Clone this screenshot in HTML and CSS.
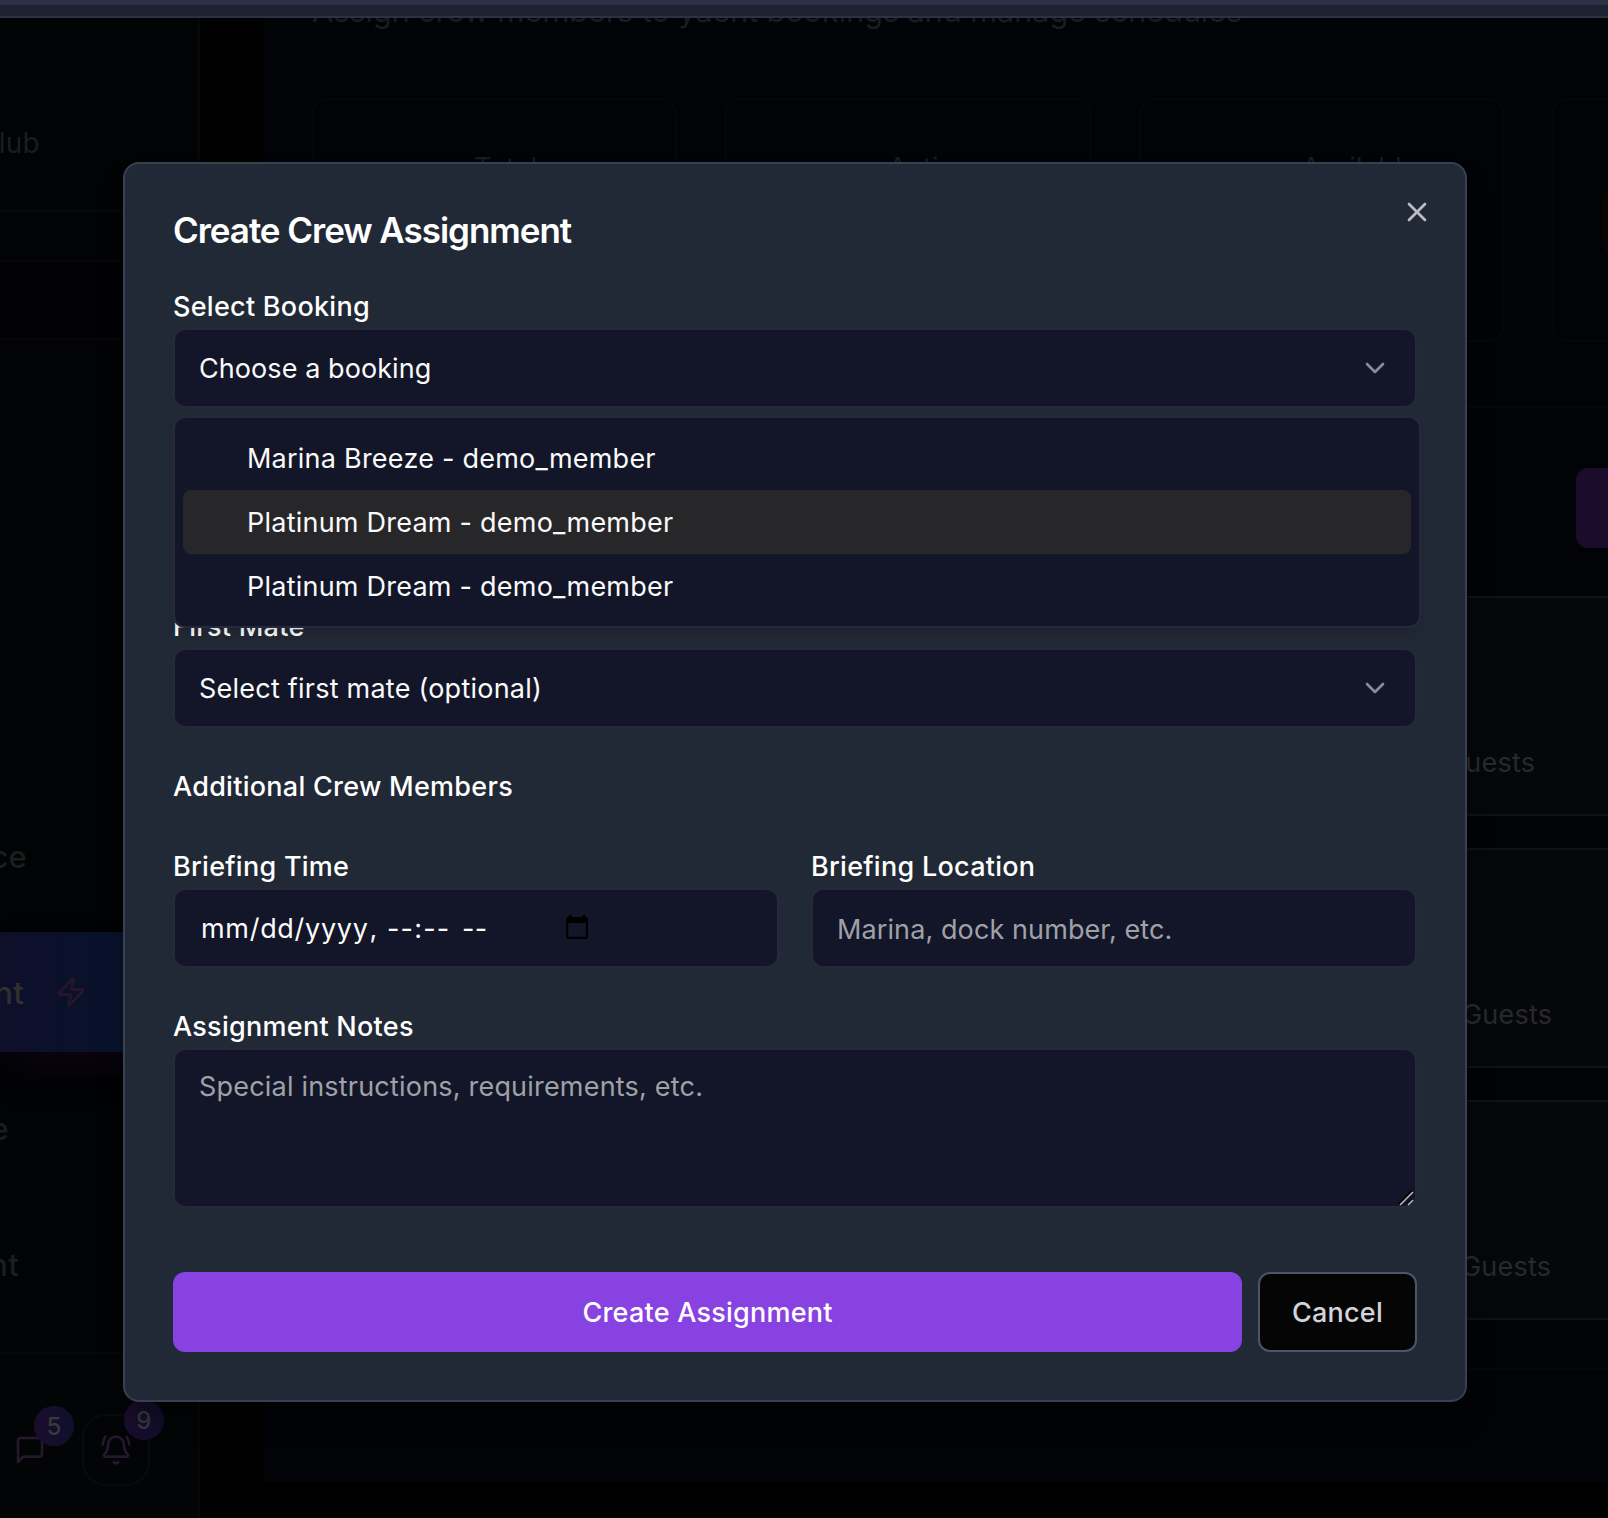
FILE: index.html
```html
<!DOCTYPE html>
<html lang="en">
<head>
<meta charset="utf-8">
<title>Create Crew Assignment</title>
<link rel="stylesheet" href="styles.css">
</head>
<body>
<div class="topbar"><div class="topbar-strip"></div></div>
<div class="page">
  <aside class="sidebar">
    <div class="brand"><span class="clip clip-club">Club</span></div>
    <div class="spacer"></div>
    <div class="profile"></div>
    <nav class="nav">
      <div class="nav-item"><span class="clip clip-ce">Maintenance</span></div>
      <div class="nav-item active"><span class="clip clip-nt">Crew Management</span>
        <svg class="zap" viewBox="0 0 24 24"><path d="M4 14a1 1 0 0 1-.78-1.63l9.9-10.2a.5.5 0 0 1 .86.46l-1.92 6.02A1 1 0 0 0 13 10h7a1 1 0 0 1 .78 1.63l-9.9 10.2a.5.5 0 0 1-.86-.46l1.92-6.02A1 1 0 0 0 11 14z"/></svg>
      </div>
      <div class="nav-item"><span class="clip clip-e">Concierge</span></div>
      <div class="nav-item"><span class="clip clip-nt2">Event</span></div>
    </nav>
    <div class="side-foot">
      <div class="foot-btn msg">
        <svg viewBox="0 0 24 24"><path d="M21 15a2 2 0 0 1-2 2H7l-4 4V5a2 2 0 0 1 2-2h14a2 2 0 0 1 2 2z"/></svg>
        <span class="badge">5</span>
      </div>
      <div class="foot-btn bell">
        <svg viewBox="0 0 24 24"><path d="M10.268 21a2 2 0 0 0 3.464 0"/><path d="M22 8c0-2.300-.8-4.300-2-6"/><path d="M3.262 15.326A1 1 0 0 0 4 17h16a1 1 0 0 0 .74-1.673C19.410 13.956 18 12.499 18 8A6 6 0 0 0 6 8c0 4.499-1.411 5.956-2.738 7.326"/><path d="M4 2C2.800 3.700 2 5.700 2 8"/></svg>
        <span class="badge">9</span>
      </div>
    </div>
  </aside>
  <main class="main">
    <p class="subtitle">Assign crew members to yacht bookings and manage schedules</p>
    <div class="stats">
      <div class="stat">Total</div>
      <div class="stat active-stat">Active</div>
      <div class="stat active-stat">Available</div>
      <div class="stat icon-stat"><span class="stat-icon"></span></div>
    </div>
    <section class="bookings">
      <div class="bookings-head"><span class="new-btn"></span></div>
      <div class="row row-a"><span>Guests</span></div>
      <div class="row"><span>Guests</span></div>
      <div class="row row-c"><span>Guests</span></div>
    </section>
  </main>
</div>

<div class="dialog">
  <svg class="close" viewBox="0 0 24 24"><path d="M18 6 6 18M6 6l12 12"/></svg>
  <h2 class="title">Create Crew Assignment</h2>
  <div class="field">
    <label>Select Booking</label>
    <div class="control select"><span class="t-choose">Choose a booking</span><svg class="chev" viewBox="0 0 24 24"><path d="m6 9 6 6 6-6"/></svg></div>
    <div class="popup">
      <div class="option">Marina Breeze - demo_member</div>
      <div class="option current">Platinum Dream - demo_member</div>
      <div class="option">Platinum Dream - demo_member</div>
    </div>
  </div>
  <div class="field">
    <div class="label-gap"></div>
    <div class="control select"></div>
  </div>
  <div class="field">
    <label>First Mate</label>
    <div class="control select"><span>Select first mate (optional)</span><svg class="chev" viewBox="0 0 24 24"><path d="m6 9 6 6 6-6"/></svg></div>
  </div>
  <div class="field"><label>Additional Crew Members</label></div>
  <div class="pair">
    <div class="field">
      <label>Briefing Time</label>
      <div class="control"><span class="date">mm/dd/yyyy<span class="comma">,</span></span><span class="time">--:--</span><span class="ampm">--</span>
        <svg class="cal" viewBox="0 0 22 24"><path fill-rule="evenodd" d="M3 0h2.500v2H16.500V0H19v2h1a2 2 0 0 1 2 2v18a2 2 0 0 1-2 2H2a2 2 0 0 1-2-2V4a2 2 0 0 1 2-2h1zM2.200 8v13.800h17.600V8z"/></svg>
      </div>
    </div>
    <div class="field">
      <label>Briefing Location</label>
      <div class="control placeholder loc"><span>Marina, dock number, etc.</span></div>
    </div>
  </div>
  <div class="field">
    <label>Assignment Notes</label>
    <div class="control placeholder area"><span>Special instructions, requirements, etc.</span>
      <svg class="grip" viewBox="0 0 16 16"><path class="grip-shade" d="M.5 14 14 .5M9 14l5-5"/><path d="M2 15 15 2M10 15l5-5"/></svg>
    </div>
  </div>
  <div class="actions">
    <button class="btn primary">Create Assignment</button>
    <button class="btn cancel">Cancel</button>
  </div>
</div>
</body>
</html>
```
FILE: styles.css
```css
* { box-sizing: border-box; }
body {
  margin: 0;
  width: 1608px;
  height: 1518px;
  overflow: hidden;
  position: relative;
  background: #000;
  color: #fafafa;
  font-family: Inter, "Liberation Sans", sans-serif;
  font-size: 27px;
  letter-spacing: 0.23px;
}
svg { fill: none; stroke: currentColor; stroke-width: 2; stroke-linecap: round; stroke-linejoin: round; display: block; flex: none; }

.topbar { height: 18px; background: #1d2331; border-bottom: 2px solid #2b3242; }
.topbar-strip { height: 5px; background: #2c3145; }
.page { display: flex; height: 1500px; }

/* sidebar */
.sidebar { width: 200px; flex: none; background: #020304; border-right: 2px solid #07080a; display: flex; flex-direction: column; color: #1c1d1e; }
.brand { height: 194px; border-bottom: 2px solid #07080a; padding-top: 105px; }
.spacer { height: 48px; }
.profile { height: 80px; background: #020106; border: solid #07070b; border-width: 2px 0; }
.clip { display: flex; justify-content: flex-end; overflow: hidden; white-space: nowrap; line-height: 40px; padding-top: 2px; }
.clip-club { width: 40px; font-size: 28px; padding-top: 0; }
.clip-ce { width: 27px; }
.clip-nt { width: 24px; color: #30302f; }
.clip-e { width: 9px; }
.clip-nt2 { width: 19px; }
.nav { height: 1012px; padding-top: 456px; display: flex; flex-direction: column; gap: 16px; font-size: 31px; font-weight: 500; }
.nav-item { height: 120px; display: flex; align-items: center; flex: none; }
.nav-item.active { background: linear-gradient(90deg, #0f0f2a, #06132b 75%); box-shadow: 0 20px 30px -8px #0b0412; }
.zap { width: 32px; height: 32px; margin-left: 31px; color: #26162c; }
.side-foot { flex: 1; background: #030406; border-top: 2px solid #07080a; display: flex; align-items: center; padding: 28px 0 0 14px; }
.foot-btn { position: relative; color: #25172c; }
.foot-btn svg { width: 32px; height: 32px; }
.msg { margin-right: 36px; }
.bell { width: 68px; height: 72px; border: 2px solid #090a0c; border-radius: 24px; display: flex; align-items: center; justify-content: center; }
.badge { position: absolute; right: -28px; top: -28px; width: 40px; height: 40px; border-radius: 50%; background: linear-gradient(90deg, #1b0c2c, #100f2d); color: #39393a; font-size: 24px; font-weight: 500; line-height: 42px; text-align: center; }
.bell .badge { right: -16px; top: -16px; }

/* main */
.main { margin-left: 64px; width: 1344px; height: 1464px; flex: none; background: #020307; padding-left: 48px; color: #1b1c1e; overflow: hidden; }
.subtitle { margin: -31px 0 0; height: 111px; line-height: 48px; font-size: 31px; white-space: nowrap; letter-spacing: -0.23px; }
.stats { display: flex; gap: 48px; width: 1700px; }
.stat { width: 365.33px; height: 244px; flex: none; border: 2px solid #06070a; border-radius: 16px; padding: 48px 0 0 160px; line-height: 40px; }
.active-stat { padding-left: 161px; }
.icon-stat { padding: 84px 0 0 48px; }
.stat-icon { display: block; width: 76px; height: 76px; border-radius: 20px; background: #080502; }
.bookings { margin-top: 64px; height: 964px; width: 1606px; border: 2px solid #06070a; display: flex; flex-direction: column; gap: 32px; }
.bookings-head { height: 156px; padding: 60px 0 0 1262px; }
.new-btn { display: block; width: 300px; height: 80px; border-radius: 12px; background: #1b0c2b; }
.row { height: 220px; background: #06070a; border: solid #101114; border-width: 2px 0; display: flex; align-items: flex-end; padding: 0 0 31px 1148px; line-height: 40px; color: #28292b; }
.row-a { padding-left: 1131px; }
.row-c { padding-left: 1147px; }

/* dialog */
.dialog {
  position: absolute; left: 123px; top: 162px; width: 1344px; height: 1240px;
  padding: 48px; background: #222936; border: 2px solid #374151; border-radius: 16px;
  box-shadow: 0 20px 30px -6px rgba(0,0,0,.4);
  display: flex; flex-direction: column; gap: 32px;
}
.close { position: absolute; right: 32px; top: 32px; width: 32px; height: 32px; color: #bcbec3; }
.title { margin: 0; font-size: 35px; line-height: 36px; font-weight: 600; letter-spacing: -1.04px; color: #fff; }
.field { position: relative; }
.field label { display: block; height: 48px; line-height: 54px; font-weight: 500; letter-spacing: 0.27px; color: #fff; }
.label-gap { height: 48px; }
.control { height: 80px; background: #131628; border: 2px solid #27283b; border-radius: 12px; padding: 0 24px; display: flex; align-items: center; line-height: 40px; }
.control > span { padding-top: 2px; }
.select { justify-content: space-between; }
.t-choose { letter-spacing: 0.07px; }
.chev { width: 32px; height: 32px; color: #898a93; }
.placeholder { color: #a0a1a8; }
.loc { padding-top: 2px; letter-spacing: 0.1px; }
.area { position: relative; height: 160px; align-items: flex-start; padding-top: 15px; letter-spacing: 0.2px; }
.grip { position: absolute; right: 1px; bottom: 0; width: 16px; height: 16px; color: #b5b5b8; stroke-width: 1.6; stroke-linecap: butt; }
.grip-shade { stroke: #000; }
.popup { position: absolute; z-index: 2; left: 0; top: 136px; width: 1248px; padding: 8px; background: #131628; border: 2px solid #27283b; border-radius: 12px; box-shadow: 0 8px 12px -2px rgba(0,0,0,.15); }
.option { height: 64px; line-height: 65px; padding-left: 64px; border-radius: 8px; }
.option.current { background: #272729; }
.pair { display: grid; grid-template-columns: 1fr 1fr; gap: 32px; }
.date { width: 188px; padding-left: 2px; white-space: nowrap; letter-spacing: 0.7px; }
.comma { margin-left: 1px; }
.time { width: 75px; white-space: nowrap; letter-spacing: 1.2px; }
.ampm { width: 104px; }
.cal { width: 22px; height: 24px; margin-bottom: 2px; fill: #000; stroke: none; }
.actions { display: flex; gap: 16px; padding-top: 32px; }
.btn { height: 80px; border-radius: 12px; font: 500 27px/40px Inter, "Liberation Sans", sans-serif; letter-spacing: inherit; padding: 2px 0 0; }
.primary { flex: 1; border: 0; background: #8942e2; color: #fff; }
.cancel { width: 159px; background: #050505; border: 2px solid #4b5563; color: #d1d5db; }
```
